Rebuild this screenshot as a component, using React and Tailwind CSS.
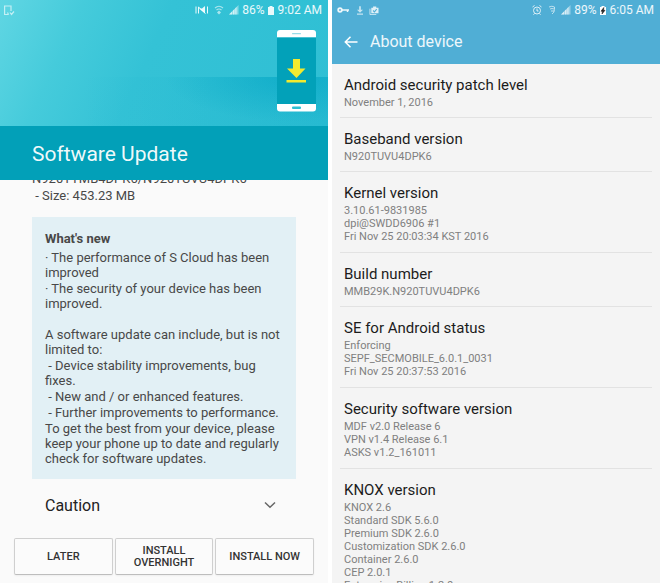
import React from 'react';

const deviceInfo = [
    { title: 'Android security patch level', lines: ['November 1, 2016'] },
    { title: 'Baseband version', lines: ['N920TUVU4DPK6'] },
    { title: 'Kernel version', lines: ['3.10.61-9831985', 'dpi@SWDD6906 #1', 'Fri Nov 25 20:03:34 KST 2016'] },
    { title: 'Build number', lines: ['MMB29K.N920TUVU4DPK6'] },
    { title: 'SE for Android status', lines: ['Enforcing', 'SEPF_SECMOBILE_6.0.1_0031', 'Fri Nov 25 20:37:53 2016'] },
    { title: 'Security software version', lines: ['MDF v2.0 Release 6', 'VPN v1.4 Release 6.1', 'ASKS v1.2_161011'] },
    {
        title: 'KNOX version',
        lines: [
            'KNOX 2.6',
            'Standard SDK 5.6.0',
            'Premium SDK 2.6.0',
            'Customization SDK 2.6.0',
            'Container 2.6.0',
            'CEP 2.0.1',
            'Enterprise Billing 1.2.0',
        ],
    },
];

const SignalIcon = () => (
    <svg viewBox="0 0 10 10" className="w-[10px] h-[10px]" fill="currentColor" aria-hidden="true">
        <path d="M0 9.5 9.5 0v9.5z" opacity="0.45" />
        <path d="M0 9.5 3 6.5v3zM3.8 5.7 5.5 4v5.5H3.8zM6.3 3.2 7.5 2v7.5H6.3z" opacity="0.7" />
    </svg>
);

const StatusBar = ({ left, right }) => (
    <div className="flex items-center justify-between h-5 pl-1 pr-[6px] text-[12px] leading-5 text-white/90">
        <div className="flex items-center gap-2">{left}</div>
        <div className="flex items-center gap-[3px]">{right}</div>
    </div>
);

const PhoneUpdateIcon = () => (
    <svg viewBox="0 0 39 82" className="w-[39px] h-[82px]" aria-hidden="true">
        <path d="M0 7.5V3a3 3 0 0 1 3-3h33a3 3 0 0 1 3 3v4.5z" fill="#fff" />
        <path d="M0 7.5h39V74H0z" fill="#02a1b9" />
        <path d="M0 74h39v4.5a3 3 0 0 1-3 3H3a3 3 0 0 1-3-3z" fill="#fff" />
        <rect x="15" y="3" width="9" height="1.3" rx="0.6" fill="#9adbe6" />
        <rect x="15" y="76.5" width="9" height="2.5" rx="1" fill="#2dbfd2" />
        <path d="M16 29h7v9.5h5.5L19.5 48 10 38.5h6z" fill="#f3ea2e" />
        <rect x="9.5" y="50" width="19.5" height="2.5" fill="#f3ea2e" />
    </svg>
);

const ActionButton = ({ children }) => (
    <button
        type="button"
        className="flex-1 h-[37px] px-2 rounded-xs border border-[#cfcfcf] border-b-[#bdbdbd] bg-[#fbfbfb] text-[11px] leading-3 font-medium text-[#333] shadow-xs"
    >
        {children}
    </button>
);

const SoftwareUpdate = () => (
    <section className="flex-1 min-w-0 flex flex-col bg-[#fafafa]">
        <header className="shrink-0 text-white">
            <div className="bg-[linear-gradient(115deg,#60d6e3_0%,#45cbdb_22%,#34c2d6_45%,#2fbfd4_100%)]">
                <div className="h-[126px] bg-[radial-gradient(ellipse_130px_45px_at_90%_0,#02a5c499,#02a5c400),linear-gradient(90deg,#02a5c400_25%,#02a5c433_100%)] bg-no-repeat bg-[position:0_77px]">
                    <StatusBar
                        left={
                            <svg viewBox="0 0 11 11" className="w-[11px] h-[11px]" fill="none" stroke="currentColor" strokeWidth="1.2" opacity="0.7" aria-hidden="true">
                                <path d="M4.5 9.5H0.6V1H7V6" />
                                <path d="M4.5 9.5 3.5 7.5M6 7.5l1.5 2L10 6.5" />
                            </svg>
                        }
                        right={
                            <>
                                <svg viewBox="0 0 14 10" className="w-[14px] h-[10px]" fill="currentColor" aria-hidden="true">
                                    <path d="M4 3.5 10 8.500V1L7 3.500z" />
                                    <path d="M1 1.500v7M12.500 1.500v7M3.500 8.500V2l7 6.500" stroke="currentColor" strokeWidth="1" fill="none" />
                                </svg>
                                <svg viewBox="0 0 10 10" className="w-[10px] h-[10px] mx-[2px]" fill="none" stroke="currentColor" strokeWidth="1.2" opacity="0.65" aria-hidden="true">
                                    <path d="M1 3q4-3.500 8 0M2.500 5q2.500-2 5 0" />
                                    <path d="M5 5.500 7 7.500 5 9.500 3 7.500z" fill="currentColor" stroke="none" />
                                </svg>
                                <SignalIcon />
                                <span>86%</span>
                                <svg viewBox="0 0 6 9" className="w-[6px] h-[9px] mr-px" fill="currentColor" aria-hidden="true">
                                    <path d="M0 1h1.500V0h3v1H6v8H0z" />
                                </svg>
                                <span>9:02 AM</span>
                            </>
                        }
                    />
                    <div className="flex justify-end pt-[10px] pr-3">
                        <PhoneUpdateIcon />
                    </div>
                </div>
            </div>
            <h1 className="h-[54px] px-8 bg-[#02a0b8] text-[21px] leading-[56px] text-white/95">Software Update</h1>
        </header>

        <div className="flex-1 min-h-0 overflow-hidden px-8 text-[13px] leading-[15px] text-[#484848]">
            <div className="-mt-[9px] whitespace-pre-wrap">
                <p>N920TTMB4DPK6/N920TUVU4DPK6</p>
                <p className="pt-[2px]"> - Size: 453.23 MB</p>
            </div>
            <div className="mt-[14px] pt-[14px] pb-[13px] px-[13px] bg-[#e2f0f5]">
                <h2 className="pb-1 font-bold">What's new</h2>
                <div className="flex flex-col gap-px whitespace-pre-wrap">
                    <p>· The performance of S Cloud has been improved</p>
                    <p>· The security of your device has been improved.</p>
                    <p className="pt-[15px]">A software update can include, but is not limited to:</p>
                    <p> - Device stability improvements, bug fixes.</p>
                    <p> - New and / or enhanced features.</p>
                    <p> - Further improvements to performance.</p>
                    <p>To get the best from your device, please keep your phone up to date and regularly check for software updates.</p>
                </div>
            </div>
            <button type="button" className="flex items-center justify-between w-full h-[52px] pl-[13px] pr-5 text-[16px] text-[#222]">
                Caution
                <svg viewBox="0 0 12 8" className="w-3 h-2" fill="none" stroke="#666" strokeWidth="1.5" aria-hidden="true">
                    <path d="M1 1.5 6 6.2 11 1.5" />
                </svg>
            </button>
        </div>

        <footer className="shrink-0 flex gap-[2px] px-[14px] pb-2">
            <ActionButton>LATER</ActionButton>
            <ActionButton>INSTALL OVERNIGHT</ActionButton>
            <ActionButton>INSTALL NOW</ActionButton>
        </footer>
    </section>
);

const AboutDevice = () => (
    <section className="flex-1 min-w-0 flex flex-col bg-[#f4f4f4]">
        <header className="shrink-0 h-16 bg-[#50aed5] text-white">
            <StatusBar
                left={
                    <>
                        <svg viewBox="0 0 12 8" className="w-3 h-2 ml-px" fill="none" stroke="currentColor" aria-hidden="true">
                            <circle cx="3" cy="4" r="1.8" strokeWidth="1.8" />
                            <path d="M5 4h7M10.5 4v2" strokeWidth="1.5" />
                        </svg>
                        <svg viewBox="0 0 7 10" className="w-[6px] h-[9px]" fill="currentColor" opacity="0.75" aria-hidden="true">
                            <path d="M2.5 0h2v4H7L3.5 7.5 0 4h2.5zM0 8.5h7V10H0z" />
                        </svg>
                        <svg viewBox="0 0 11 10" className="w-[10px] h-[9px] -ml-[2px]" aria-hidden="true">
                            <path d="M1 3v6.5h7" fill="none" stroke="currentColor" opacity="0.8" />
                            <path d="M2.5 2H4.5V0.5H8V2h2.5v6h-8z" fill="currentColor" opacity="0.9" />
                            <path d="M4.5 5 6 6.5 8.5 3.5" fill="none" stroke="#50aed5" strokeWidth="1.2" />
                        </svg>
                    </>
                }
                right={
                    <>
                        <svg viewBox="0 0 10 10" className="w-[10px] h-[10px] mr-[3px]" fill="none" stroke="currentColor" opacity="0.9" aria-hidden="true">
                            <circle cx="5" cy="5.5" r="3.5" />
                            <path d="M5 3.5V6h1.5M0.5 2 2.5 0.5M9.5 2 7.5 0.5M2.5 8.5 1.5 9.7M7.5 8.5 8.5 9.7" />
                        </svg>
                        <svg viewBox="0 0 8 10" className="w-2 h-[10px] mr-[2px]" fill="none" stroke="currentColor" opacity="0.7" aria-hidden="true">
                            <path d="M1 2q3-1.5 5.5 0V4.5Q6.5 7.5 4 9M2 4q2-1 4 0M3 6h3" />
                        </svg>
                        <SignalIcon />
                        <span>89%</span>
                        <svg viewBox="0 0 6 9" className="w-[6px] h-[9px] mr-px" aria-hidden="true">
                            <path d="M0 1h1.5V0h3v1H6v8H0z" fill="#fff" />
                            <path d="M3.8 1.5 1 5.2h1.5L2 8 5 4.3H3.5z" fill="#222" stroke="#222" strokeWidth="0.6" />
                        </svg>
                        <span>6:05 AM</span>
                    </>
                }
            />
            <div className="flex items-center gap-3 h-11 px-3">
                <button type="button" aria-label="Back">
                    <svg viewBox="0 0 14 12" className="w-[14px] h-3" fill="none" stroke="currentColor" strokeWidth="1.5" aria-hidden="true">
                        <path d="M6.5 0.8 1.3 6l5.2 5.2M1.3 6H13.5" />
                    </svg>
                </button>
                <h1 className="text-[16px] leading-5 text-white/90">About device</h1>
            </div>
        </header>

        <ul className="flex-1 min-h-0 overflow-hidden px-2">
            {deviceInfo.map(({ title, lines }) => (
                <li
                    key={title}
                    className={`pt-[11px] px-1 border-b border-[#e2e2e2] ${lines.length > 1 ? 'pb-[9px]' : 'pb-2'}`}
                >
                    <h2 className="pb-px text-[15px] leading-5 text-[#1c1c1c]">{title}</h2>
                    {lines.map((line) => (
                        <p key={line} className="text-[11px] leading-[13px] text-[#808080]">{line}</p>
                    ))}
                </li>
            ))}
        </ul>
    </section>
);

const App = () => (
    <main className="flex gap-1 h-screen overflow-hidden bg-white font-[Roboto,sans-serif]">
        <SoftwareUpdate />
        <AboutDevice />
    </main>
);

export default App;
